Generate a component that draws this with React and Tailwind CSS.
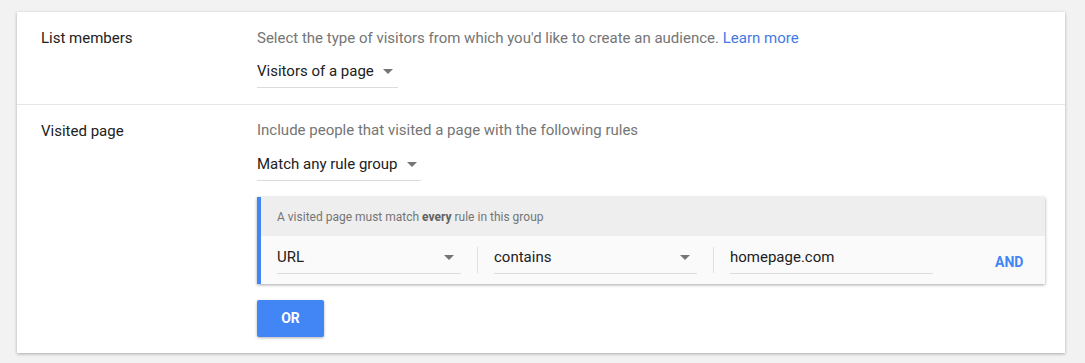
import React from 'react'

const Caret = () => (
    <svg width="10" height="5" viewBox="0 0 10 5" className="shrink-0">
        <path d="M0 0 L10 0 L5 5 Z" fill="#757575" />
    </svg>
)

const Dropdown = ({ label, width, spread }) => (
    <div
        className={`flex items-center ${spread ? 'justify-between pr-[7px]' : 'gap-[9px]'} border-b border-[#dcdcdc] pb-[6px] text-[15px] leading-[20px] text-[#212121] ${width}`}
    >
        <span>{label}</span>
        <Caret />
    </div>
)

const Row = ({ label, children, last }) => (
    <div className={`flex ${last ? '' : 'border-b border-[#e6e6e6]'}`}>
        <div className="w-[240px] shrink-0 pl-[24px] pt-[16px] text-[15px] leading-[20px] text-[#212121]">
            {label}
        </div>
        <div className="flex-1 pt-[16px] pb-[16px] pr-[20px]">{children}</div>
    </div>
)

export default function App() {
    return (
        <div className="min-h-screen bg-[#f2f2f2] pt-[12px] pl-[17px] font-['Roboto',sans-serif]">
            <div className="w-[1048px] bg-white shadow-[0_1px_3px_rgba(0,0,0,0.3)]">
                <Row label="List members">
                    <p className="text-[15px] leading-[20px] text-[#757575]">
                        Select the type of visitors from which you'd like to create an audience.{' '}
                        <a className="text-[#4479e6]">Learn more</a>
                    </p>
                    <div className="mt-[13px] flex">
                        <Dropdown label="Visitors of a page" width="w-[141px]" />
                    </div>
                </Row>
                <Row label="Visited page" last>
                    <p className="-mt-[1px] text-[15px] leading-[20px] text-[#757575]">
                        Include people that visited a page with the following rules
                    </p>
                    <div className="mt-[14px] flex">
                        <Dropdown label="Match any rule group" width="w-[164px]" />
                    </div>
                    <div className="mt-[16px] w-[788px] border-l-[4px] border-[#4285f4] shadow-[0_1px_3px_rgba(0,0,0,0.35)]">
                        <div className="flex h-[39px] items-center bg-[#eeeeee] pl-[16px] text-[12px] text-[#757575]">
                            <span>
                                A visited page must match <b className="font-bold text-[#616161]">every</b> rule in this group
                            </span>
                        </div>
                        <div className="flex h-[48px] items-start bg-[#fafafa] pl-[16px] pt-[11px]">
                            <Dropdown label="URL" width="w-[184px]" spread />
                            <div className="mx-[16px] h-[26px] w-px bg-[#e0e0e0]" />
                            <Dropdown label="contains" width="w-[203px]" spread />
                            <div className="mx-[16px] h-[26px] w-px bg-[#e0e0e0]" />
                            <div className="w-[203px] border-b border-[#dcdcdc] pb-[6px] text-[15px] leading-[20px] text-[#212121]">
                                homepage.com
                            </div>
                            <button className="ml-[62px] mt-[5px] text-[14px] leading-[20px] font-bold text-[#4285f4]">
                                AND
                            </button>
                        </div>
                    </div>
                    <button className="mt-[16px] h-[37px] w-[67px] rounded-[2px] bg-[#4285f4] text-[14px] font-bold text-white shadow-[0_1px_3px_rgba(0,0,0,0.3)]">
                        OR
                    </button>
                </Row>
            </div>
        </div>
    )
}
